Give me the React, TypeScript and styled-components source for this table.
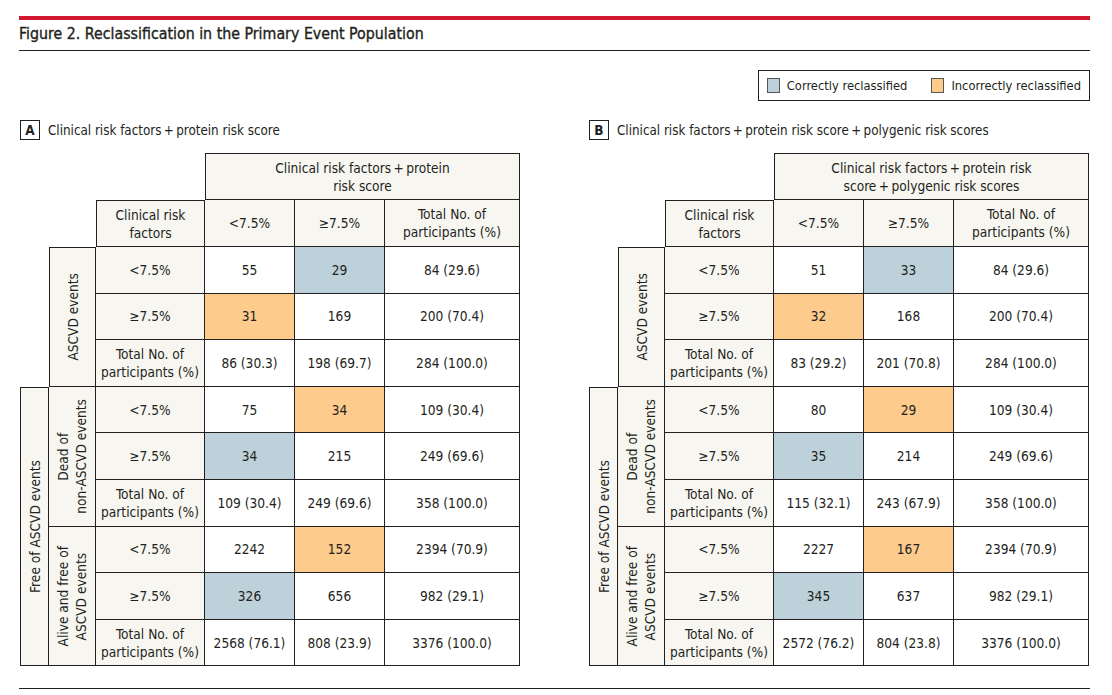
import type { FC, ReactNode } from "react";
import styled, { createGlobalStyle, css } from "styled-components";

const font = `"Liberation Sans Narrow", "Arial Narrow", "DejaVu Sans Condensed", "Liberation Sans", sans-serif`;
const ink = "#231f20";
const plus = "\u2009+\u2009";

const colors = {
  head: "#f7f6f1",
  blue: "#bdd1da",
  orange: "#fdcb8c",
  white: "#ffffff",
};

type Fill = keyof typeof colors;

const GlobalStyle = createGlobalStyle`
  html, body {
    margin: 0;
    padding: 0;
    background: #fff;
  }
  body {
    font-family: ${font};
    color: ${ink};
  }
`;

const Page = styled.div`
  width: 1071px;
  margin-left: 19px;
  padding-top: 16px;
`;

const RedBar = styled.div`
  height: 4px;
  background: #d3162f;
`;

const Title = styled.h1`
  margin: 0;
  padding: 4px 0 6px;
  font-size: 15.8px;
  font-weight: 400;
  line-height: 20px;
  -webkit-text-stroke: 0.35px ${ink};
  border-bottom: 1px solid ${ink};
`;

const LegendRow = styled.div`
  display: flex;
  justify-content: flex-end;
  margin-top: 19px;
`;

const Legend = styled.div`
  display: flex;
  align-items: center;
  gap: 24px;
  height: 31px;
  box-sizing: border-box;
  border: 1px solid ${ink};
  padding: 0 8px;
  font-size: 12.8px;
`;

const LegendItem = styled.div`
  display: flex;
  align-items: center;
  gap: 7px;
`;

const Swatch = styled.span<{ $fill: Fill }>`
  width: 13px;
  height: 15px;
  box-sizing: border-box;
  border: 1px solid #555;
  background: ${(p) => colors[p.$fill]};
`;

const Panels = styled.div`
  display: flex;
  gap: 69px;
  padding-left: 1px;
  margin-top: 19px;
`;

const Panel = styled.section`
  width: 500px;
`;

const PanelHeading = styled.div`
  display: flex;
  align-items: center;
  gap: 8px;
  height: 20px;
  font-size: 13.3px;
`;

const PanelLetter = styled.span`
  width: 20px;
  height: 20px;
  box-sizing: border-box;
  border: 1px solid ${ink};
  display: flex;
  align-items: center;
  justify-content: center;
  font-weight: 700;
  font-size: 13.5px;
`;

const Grid = styled.div`
  display: grid;
  grid-template-columns: 29px 47px 109px 90px 90px 135px;
  grid-template-rows: 47px 47px repeat(9, 46.6px);
  margin-top: 13px;
  font-size: 13.6px;
  line-height: 18px;
`;

const Cell = styled.div<{
  $col: string;
  $row: string;
  $fill?: Fill;
  $top?: boolean;
  $left?: boolean;
}>`
  grid-column: ${(p) => p.$col};
  grid-row: ${(p) => p.$row};
  display: flex;
  align-items: center;
  justify-content: center;
  text-align: center;
  box-sizing: border-box;
  background: ${(p) => colors[p.$fill ?? "white"]};
  border-right: 1px solid ${ink};
  border-bottom: 1px solid ${ink};
  ${(p) =>
    p.$top &&
    css`
      border-top: 1px solid ${ink};
    `}
  ${(p) =>
    p.$left &&
    css`
      border-left: 1px solid ${ink};
    `}
`;

const Vertical = styled.span`
  writing-mode: vertical-rl;
  transform: rotate(180deg);
  text-align: center;
  white-space: nowrap;
`;

type Value = string | [string, Fill];

interface Block {
  label: ReactNode;
  rows: [Value, Value, Value][];
}

interface PanelData {
  letter: string;
  heading: string;
  header: ReactNode;
  ascvd: Block;
  dead: Block;
  alive: Block;
}

const rowLabels: ReactNode[] = [
  "<7.5%",
  "≥7.5%",
  <>
    Total No. of
    <br />
    participants (%)
  </>,
];

const deadLabel = (
  <>
    Dead of
    <br />
    non-ASCVD events
  </>
);

const aliveLabel = (
  <>
    Alive and free of
    <br />
    ASCVD events
  </>
);

const panels: PanelData[] = [
  {
    letter: "A",
    heading: `Clinical risk factors${plus}protein risk score`,
    header: (
      <>
        {`Clinical risk factors${plus}protein`}
        <br />
        risk score
      </>
    ),
    ascvd: {
      label: "ASCVD events",
      rows: [
        ["55", ["29", "blue"], "84 (29.6)"],
        [["31", "orange"], "169", "200 (70.4)"],
        ["86 (30.3)", "198 (69.7)", "284 (100.0)"],
      ],
    },
    dead: {
      label: deadLabel,
      rows: [
        ["75", ["34", "orange"], "109 (30.4)"],
        [["34", "blue"], "215", "249 (69.6)"],
        ["109 (30.4)", "249 (69.6)", "358 (100.0)"],
      ],
    },
    alive: {
      label: aliveLabel,
      rows: [
        ["2242", ["152", "orange"], "2394 (70.9)"],
        [["326", "blue"], "656", "982 (29.1)"],
        ["2568 (76.1)", "808 (23.9)", "3376 (100.0)"],
      ],
    },
  },
  {
    letter: "B",
    heading: `Clinical risk factors${plus}protein risk score${plus}polygenic risk scores`,
    header: (
      <>
        {`Clinical risk factors${plus}protein risk`}
        <br />
        {`score${plus}polygenic risk scores`}
      </>
    ),
    ascvd: {
      label: "ASCVD events",
      rows: [
        ["51", ["33", "blue"], "84 (29.6)"],
        [["32", "orange"], "168", "200 (70.4)"],
        ["83 (29.2)", "201 (70.8)", "284 (100.0)"],
      ],
    },
    dead: {
      label: deadLabel,
      rows: [
        ["80", ["29", "orange"], "109 (30.4)"],
        [["35", "blue"], "214", "249 (69.6)"],
        ["115 (32.1)", "243 (67.9)", "358 (100.0)"],
      ],
    },
    alive: {
      label: aliveLabel,
      rows: [
        ["2227", ["167", "orange"], "2394 (70.9)"],
        [["345", "blue"], "637", "982 (29.1)"],
        ["2572 (76.2)", "804 (23.8)", "3376 (100.0)"],
      ],
    },
  },
];

// three grid rows (<7.5%, ≥7.5%, total) starting at grid row `start`
const BlockRows: FC<{ block: Block; start: number }> = ({ block, start }) => (
  <>
    {block.rows.map((row, i) => {
      const r = `${start + i}`;
      return [
        <Cell key={`l${r}`} $col="3" $row={r} $fill="head">
          <span>{rowLabels[i]}</span>
        </Cell>,
        ...row.map((v, j) => {
          const [text, fill] = typeof v === "string" ? [v, "white" as Fill] : v;
          return (
            <Cell key={`v${r}-${j}`} $col={`${4 + j}`} $row={r} $fill={fill}>
              {text}
            </Cell>
          );
        }),
      ];
    })}
  </>
);

const Table: FC<{ data: PanelData }> = ({ data }) => (
  <Grid>
    <Cell $col="4 / 7" $row="1" $fill="head" $top $left>
      <span>{data.header}</span>
    </Cell>
    <Cell $col="3" $row="2" $fill="head" $top $left>
      <span>
        Clinical risk
        <br />
        factors
      </span>
    </Cell>
    <Cell $col="4" $row="2" $fill="head">
      &lt;7.5%
    </Cell>
    <Cell $col="5" $row="2" $fill="head">
      ≥7.5%
    </Cell>
    <Cell $col="6" $row="2" $fill="head">
      <span>
        Total No. of
        <br />
        participants (%)
      </span>
    </Cell>

    <Cell $col="2" $row="3 / 6" $fill="head" $top $left>
      <Vertical>{data.ascvd.label}</Vertical>
    </Cell>
    <BlockRows block={data.ascvd} start={3} />

    <Cell $col="1" $row="6 / 12" $fill="head" $top $left>
      <Vertical>Free of ASCVD events</Vertical>
    </Cell>
    <Cell $col="2" $row="6 / 9" $fill="head">
      <Vertical>{data.dead.label}</Vertical>
    </Cell>
    <BlockRows block={data.dead} start={6} />
    <Cell $col="2" $row="9 / 12" $fill="head">
      <Vertical>{data.alive.label}</Vertical>
    </Cell>
    <BlockRows block={data.alive} start={9} />
  </Grid>
);

const BottomRule = styled.div`
  margin-top: 22px;
  border-top: 1px solid ${ink};
`;

export default function App() {
  return (
    <>
      <GlobalStyle />
      <Page>
        <RedBar />
        <Title>Figure 2. Reclassification in the Primary Event Population</Title>
        <LegendRow>
          <Legend>
            <LegendItem>
              <Swatch $fill="blue" />
              Correctly reclassified
            </LegendItem>
            <LegendItem>
              <Swatch $fill="orange" />
              Incorrectly reclassified
            </LegendItem>
          </Legend>
        </LegendRow>
        <Panels>
          {panels.map((p) => (
            <Panel key={p.letter}>
              <PanelHeading>
                <PanelLetter>{p.letter}</PanelLetter>
                {p.heading}
              </PanelHeading>
              <Table data={p} />
            </Panel>
          ))}
        </Panels>
        <BottomRule />
      </Page>
    </>
  );
}
